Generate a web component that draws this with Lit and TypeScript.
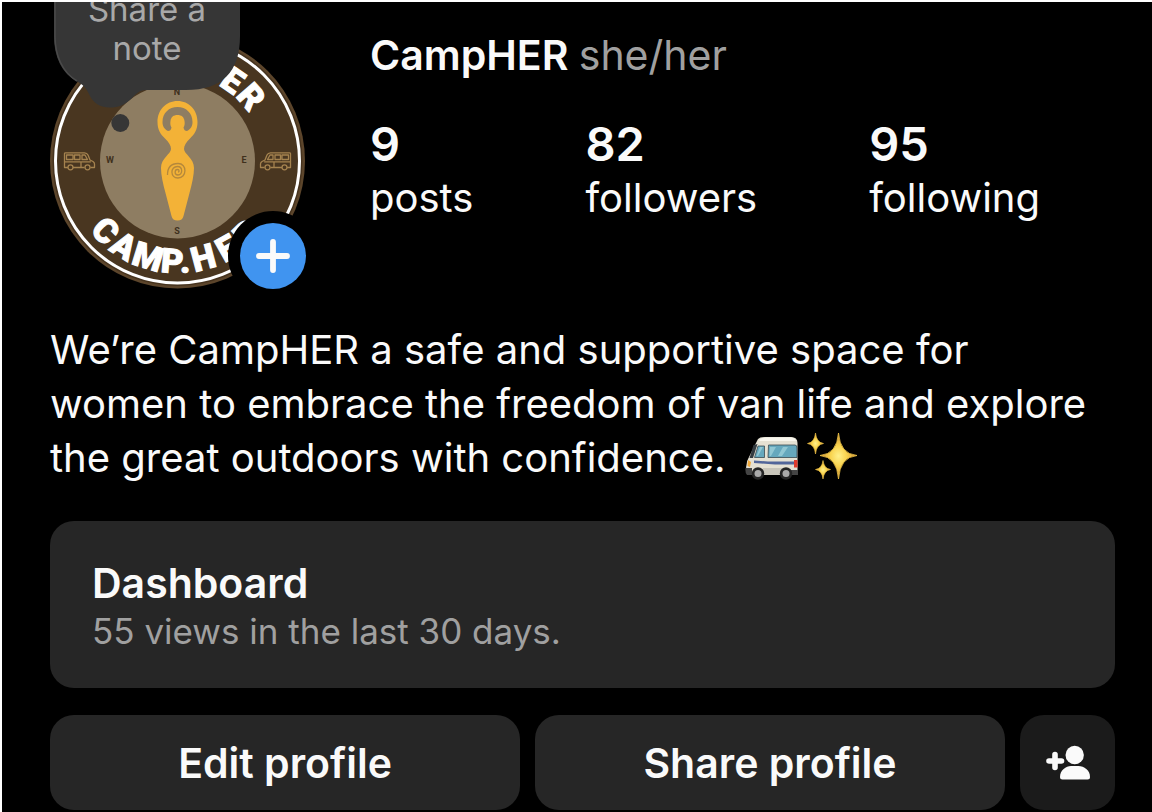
import { LitElement, html, css, svg } from "lit";
import { customElement } from "lit/decorators.js";

const van = svg`
  <g fill="none" stroke="#a5834f" stroke-width="1.3" stroke-linejoin="round" stroke-linecap="round">
    <path d="M1 15.500V1.500Q1 .8 2 .8H21Q23.500 .8 24.500 3L26.500 8L29.500 9.500Q31 10.500 31 12V15.500H27.500M20.500 15.500H10M4 15.500H1"/>
    <path d="M3 3H9.500V7.500H3ZM11 3H16.500V7.500H11ZM18.500 3H21.500L24 7.500H18.500ZM1 9.800H27M17.500 9.800V15"/>
    <circle cx="7" cy="15.300" r="2.500"/>
    <circle cx="24" cy="15.300" r="2.500"/>
  </g>`;

@customElement("profile-badge")
class ProfileBadge extends LitElement {
  static styles = css`
    :host { display: block; }
    .badge { display: block; width: 100%; height: auto; }
    .ring-text {
      font-family: Roboto, sans-serif;
      font-weight: 900;
      font-size: 34px;
      fill: #fff;
      stroke: #fff;
      stroke-width: 1;
    }
    .compass {
      font-family: Roboto, sans-serif;
      font-weight: 700;
      font-size: 9px;
      fill: #3f301d;
      text-anchor: middle;
    }
  `;

  render() {
    return html`
      <svg class="badge" viewBox="50 33 256 256" role="img" aria-label="Camp.her badge">
        <defs>
          <path id="upper" d="M91.500 161A86 86 0 0 1 263.500 161"/>
          <path id="lower" d="M65.500 161A112 112 0 0 0 289.500 161"/>
        </defs>
        <circle cx="177.500" cy="161" r="127.500" fill="#5c452b"/>
        <circle cx="177.500" cy="161" r="125" fill="#46331e"/>
        <circle cx="177.500" cy="161" r="122" fill="#493620" stroke="#fff" stroke-width="3"/>
        <circle cx="177.500" cy="161" r="77.500" fill="#8e7d62"/>
        <text class="ring-text" dx="0 1"><textPath href="#upper" startOffset="177">ER</textPath></text>
        <text class="ring-text" dx="0 4 3 1 5 4 7 7"><textPath href="#lower" startOffset="75">CAMP.HER</textPath></text>
        <text class="compass" x="177" y="95">N</text>
        <text class="compass" x="177" y="234">S</text>
        <text class="compass" x="110" y="163">W</text>
        <text class="compass" x="244" y="163">E</text>
        <g transform="translate(63.500 152)">${van}</g>
        <g transform="translate(291.500 152) scale(-1 1)">${van}</g>
        <path fill="#f3b237" fill-rule="evenodd"
          d="M177.500 101C166 101 157.500 110 157.500 122C157.500 130 160.500 134 165 138.500C169 142.500 171 145.500 171 149C171 154 161 158 161 168C161 175 163 184 165.500 193L171.500 216Q172.500 220.500 177.500 220.500Q182.500 220.500 183.500 216L189.500 193C192 184 194 175 194 168C194 158 184 154 184 149C184 145.500 186 142.500 190 138.500C194.500 134 197.500 130 197.500 122C197.500 110 189 101 177.500 101Z
             M168 131C164 129 162.500 126 162.500 122C162.500 113 169 107 177.500 107C186 107 192.500 113 192.500 122C192.500 126 191 129 187 131C185 131 184 130 183.500 127.500C184.500 126 185 124 184.500 121C184 117 181.500 115 177.500 115C173.500 115 171 117 170.500 121C170 124 170.500 126 171.500 127.500C171 130 170 131 168 131Z"/>
        <path fill="none" stroke="#b5883b" stroke-width="1.300"
          d="M178 172C179.500 172 179.500 169.500 177.500 169.500C174.500 169.500 174 175 178 175C183 175 183 166.500 177.500 166.500C170 166.500 170 178 178 178C187 178 187.500 163.500 178 163.500C171 163.500 167.500 168 167.500 175"/>
      </svg>
    `;
  }
}

@customElement("app-root")
class AppRoot extends LitElement {
  static styles = css`
    :host {
      display: block;
      box-sizing: border-box;
      min-height: 100vh;
      overflow: hidden;
      padding: 31px 37px 2px 48px;
      border-top: 2px solid #fff;
      border-left: 2px solid #fff;
      background: #000;
      color: #fafafa;
      font-family: Inter, sans-serif;
      font-size: 40px;
      line-height: 54px;
    }
    * { box-sizing: border-box; margin: 0; }
    button { border: 0; padding: 0; font: inherit; color: inherit; cursor: pointer; }
    a { color: inherit; text-decoration: none; }
    svg { display: block; }

    .header { display: grid; grid-template-columns: 256px 1fr; column-gap: 64px; }
    .avatar { position: relative; align-self: start; }
    .note {
      position: absolute;
      left: 3px;
      bottom: 156px;
      display: flex;
      align-items: flex-start;
      justify-content: center;
      width: 188px;
      height: 144px;
      padding: 1px 24px 0;
      background: none;
      color: #a8a8a8;
      font-size: 33px;
      line-height: 39px;
    }
    .bubble { position: absolute; left: 0; top: 0; }
    .note-text { position: relative; }
    .add {
      position: absolute;
      right: 0;
      bottom: 0;
      display: grid;
      place-items: center;
      width: 66px;
      height: 66px;
      border-radius: 50%;
      background: #4094f0;
      box-shadow: 0 0 0 12px #000;
    }

    .name { font-size: 41px; line-height: 44px; font-weight: 600; }
    .pronouns { color: #a0a0a0; font-weight: 400; }
    .stats { display: flex; gap: 112px; margin-top: 40px; }
    .stat { display: grid; }
    .count { font-size: 47px; font-weight: 600; }

    .bio { margin-top: 34px; }
    .emoji { display: inline-block; vertical-align: -8px; margin-left: 8px; }

    .dashboard {
      display: block;
      margin-top: 36px;
      padding: 38px 42px 33px;
      border-radius: 24px;
      background: #262626;
      line-height: 48px;
    }
    .dashboard-title { font-size: 41px; line-height: 48px; font-weight: 600; }
    .dashboard-views { color: #a0a0a0; font-size: 35px; }

    .actions { display: grid; grid-template-columns: 1fr 1fr 95px; gap: 15px; margin-top: 27px; }
    .action {
      display: grid;
      place-items: center;
      height: 95px;
      border-radius: 24px;
      background: #262626;
      font-size: 41px;
      font-weight: 600;
    }
    .discover { background: #1b1b1b; }
  `;

  render() {
    return html`
      <header class="header">
        <div class="avatar">
          <profile-badge></profile-badge>
          <button class="note">
            <svg class="bubble" width="188" height="144" viewBox="53 -11 188 144" aria-hidden="true">
              <path fill="#363636" d="M54 -11H240V36C240 72 222 90 186 90H146C139 90 136 94 131 99C125 105 118 107.500 110 107.500C99 107.500 93 102 90 96C87 90 85 86 78 82C62 74 54 57 54 36Z"/>
              <path fill="none" stroke="#4a4a4a" stroke-width="1.500" d="M55 -11V36C55 55 62 72 77 81"/>
              <circle cx="120.300" cy="123" r="9" fill="#363636"/>
            </svg>
            <span class="note-text">Share a note</span>
          </button>
          <button class="add" aria-label="Add to story">
            <svg width="34" height="34" viewBox="0 0 34 34">
              <path d="M17 3V31M3 17H31" stroke="#fafafa" stroke-width="5.800" stroke-linecap="round"/>
            </svg>
          </button>
        </div>
        <div class="details">
          <h1 class="name">CampHER <span class="pronouns">she/her</span></h1>
          <nav class="stats">
            <a class="stat" href="#posts"><span class="count">9</span><span>posts</span></a>
            <a class="stat" href="#followers"><span class="count">82</span><span>followers</span></a>
            <a class="stat" href="#following"><span class="count">95</span><span>following</span></a>
          </nav>
        </div>
      </header>

      <p class="bio">
        We’re CampHER a safe and supportive space for women to embrace the freedom of van life and explore the great outdoors with confidence.
        <svg class="emoji" width="54" height="44" viewBox="750 437 54 44" role="img" aria-label="Van">
          <path fill="#e5e1d3" d="M763 440Q765 438 770 438H796Q802.500 438 802.500 444V474H752Q750.500 470 751.500 466Q752 461 754 458Z"/>
          <path fill="#f8f6ed" d="M765 440Q767 438.500 772 438.500H796Q800 438.500 801 442H764Z"/>
          <path fill="#343b40" d="M758.500 446L762.500 445L758 459L754.500 459Z"/>
          <path fill="#66a8bd" stroke="#3a4a50" stroke-width=".8" d="M763 447H769.500V458.500H759.500ZM773.500 446H800Q802 446 802 449V458.500H773Z"/>
          <path fill="#91c7d3" d="M775 448H781L776 457H774.500ZM788 448H793L787 457H783ZM765 448H768L763 457H761.500Z"/>
          <path fill="#52669a" d="M759 461.500L773 462.500H799V465.500H780L759 464Z"/>
          <path fill="#e03a2c" d="M799 461H802.500V468.500H799Z"/>
          <path fill="#f2a93b" d="M753 461L756 463L755 468L752.500 467Z"/>
          <path fill="#444" d="M750.500 469H757V476H752Q750 474 750.500 469ZM782 471H803V476H782Z"/>
          <path fill="#c8c5ba" d="M768 469H788V476H768Z"/>
          <circle cx="763" cy="474.500" r="6.200" fill="#252525"/>
          <circle cx="791" cy="474.500" r="6.200" fill="#252525"/>
          <circle cx="763" cy="474.500" r="3.500" fill="#aaa"/>
          <circle cx="791" cy="474.500" r="3.500" fill="#aaa"/>
        </svg><svg class="emoji" width="50" height="48" viewBox="811 433 50 48" role="img" aria-label="Sparkles">
          <defs>
            <radialGradient id="gold">
              <stop offset="0" stop-color="#fff08a"/>
              <stop offset=".45" stop-color="#f8d24c"/>
              <stop offset="1" stop-color="#c98a35"/>
            </radialGradient>
          </defs>
          <g fill="url(#gold)">
            <path d="M842.500 434Q844 455 861 456.500Q844 458 842.500 480Q841 458 824 456.500Q841 455 842.500 434Z" stroke="#f4c848" stroke-width=".8"/>
            <path d="M819.500 434Q820.500 443.500 827.500 444.500Q820.500 445.500 819.500 455Q818.500 445.500 811.500 444.500Q818.500 443.500 819.500 434Z" stroke="#f4c848" stroke-width=".6"/>
            <path d="M827 461.500Q828 469.500 834.500 470.500Q828 471.500 827 480Q826 471.500 819.500 470.500Q826 469.500 827 461.500Z" stroke="#f4c848" stroke-width=".6"/>
          </g>
        </svg>
      </p>

      <a class="dashboard" href="#dashboard">
        <h2 class="dashboard-title">Dashboard</h2>
        <p class="dashboard-views">55 views in the last 30 days.</p>
      </a>

      <div class="actions">
        <button class="action">Edit profile</button>
        <button class="action">Share profile</button>
        <button class="action discover" aria-label="Discover people">
          <svg width="44" height="36" viewBox="0 0 44 36" fill="#fafafa">
            <circle cx="28.700" cy="10" r="9.200"/>
            <path d="M14 32C14 25 20 21 25 21H32.500C38 21 44 25 44 32Q44 34.500 41.500 34.500H16.500Q14 34.500 14 32Z"/>
            <path d="M9 9.500V22.500M3 16H15.500" stroke="#fafafa" stroke-width="5.600" stroke-linecap="round"/>
          </svg>
        </button>
      </div>
    `;
  }
}
